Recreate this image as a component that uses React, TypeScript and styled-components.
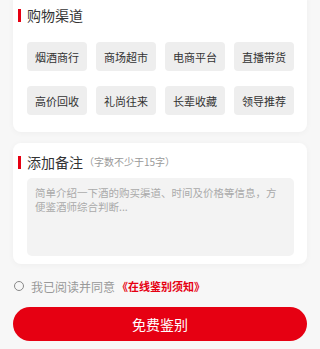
import styled, { createGlobalStyle } from 'styled-components'

const GlobalStyle = createGlobalStyle`
  html, body {
    margin: 0;
    padding: 0;
    background-color: #f7f7f7;
    font-family: "Noto Sans CJK SC", "Noto Sans", sans-serif;
  }
`
const Page = styled.div`
  display: flex;
  flex-direction: column;
  padding: 0 13px;
  height: 349px;
  overflow: hidden;
`
const Card = styled.div<{ $top: number; $bottom: number; $mt: number }>`
  background-color: #ffffff;
  border-radius: 8px;
  box-shadow: 0 1px 6px rgba(0, 0, 0, 0.04);
  padding: ${(p) => p.$top}px 13px ${(p) => p.$bottom}px 14px;
  margin-top: ${(p) => p.$mt}px;
`
const Heading = styled.div`
  display: flex;
  align-items: center;
  height: 20px;
  margin-left: -9px;
`
const Bar = styled.span`
  width: 2.5px;
  height: 13px;
  background-color: #e60012;
  margin-right: 6.5px;
`
const HeadingText = styled.span`
  font-size: 14px;
  color: #333333;
  line-height: 20px;
`
const Hint = styled.span`
  font-size: 10px;
  color: #999999;
  margin-left: 1px;
  line-height: 20px;
`
const ChipGrid = styled.div`
  display: grid;
  grid-template-columns: repeat(4, 1fr);
  column-gap: 9px;
  row-gap: 15px;
  margin-top: 17px;
`
const Chip = styled.div`
  height: 29px;
  display: flex;
  align-items: center;
  justify-content: center;
  background-color: #eeeeee;
  border-radius: 4px;
  font-size: 11px;
  color: #333333;
`
const Note = styled.div`
  height: 78px;
  margin-top: 6px;
  box-sizing: border-box;
  padding: 8px 8px;
  background-color: #f3f3f3;
  border-radius: 5px;
  font-size: 10.5px;
  line-height: 13.7px;
  color: #aaaaaa;
`
const AgreeRow = styled.div`
  display: flex;
  align-items: center;
  height: 18px;
  margin-top: 13px;
  padding-left: 1px;
`
const Radio = styled.span`
  width: 8px;
  height: 8px;
  border: 1px solid #888888;
  border-radius: 50%;
  margin-right: 7px;
`
const AgreeText = styled.span`
  font-size: 12px;
  color: #999999;
`
const AgreeLink = styled.span`
  font-size: 11px;
  font-weight: bold;
  color: #e60012;
  margin-left: 2px;
`
const SubmitBtn = styled.div`
  height: 34px;
  margin-top: 12px;
  border-radius: 17px;
  background-color: #e60012;
  display: flex;
  align-items: center;
  justify-content: center;
  font-size: 14px;
  color: #ffffff;
`

const channels = ['烟酒商行', '商场超市', '电商平台', '直播带货', '高价回收', '礼尚往来', '长辈收藏', '领导推荐']

function App() {
  return (
    <>
      <GlobalStyle />
      <Page>
        <Card $top={13} $bottom={17} $mt={-8}>
          <Heading>
            <Bar />
            <HeadingText>购物渠道</HeadingText>
          </Heading>
          <ChipGrid>
            {channels.map((c) => (
              <Chip key={c}>{c}</Chip>
            ))}
          </ChipGrid>
        </Card>
        <Card $top={9} $bottom={8} $mt={11}>
          <Heading>
            <Bar />
            <HeadingText>添加备注</HeadingText>
            <Hint>（字数不少于15字）</Hint>
          </Heading>
          <Note>简单介绍一下酒的购买渠道、时间及价格等信息，方便鉴酒师综合判断...</Note>
        </Card>
        <AgreeRow>
          <Radio />
          <AgreeText>我已阅读并同意</AgreeText>
          <AgreeLink>《在线鉴别须知》</AgreeLink>
        </AgreeRow>
        <SubmitBtn>免费鉴别</SubmitBtn>
      </Page>
    </>
  )
}
export default App
